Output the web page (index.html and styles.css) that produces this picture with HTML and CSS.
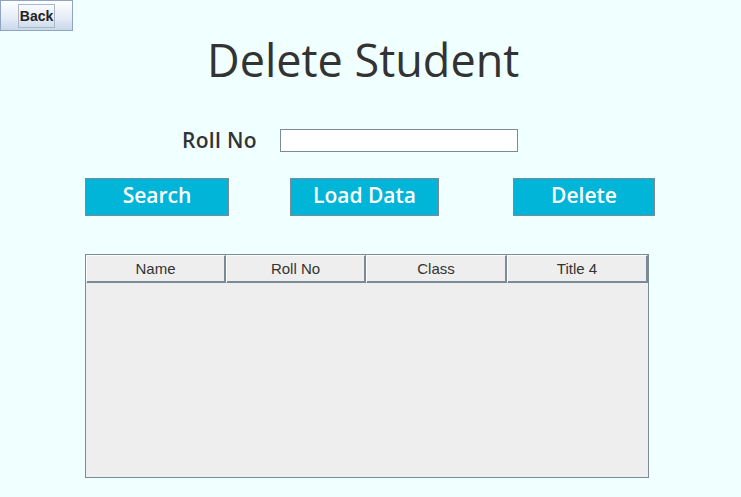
FILE: index.html
```html
<!DOCTYPE html>
<html>
<head>
<meta charset="utf-8">
<link rel="stylesheet" href="styles.css">
</head>
<body>
<button class="back"><span class="back-focus">Back</span></button>
<h1 class="title">Delete Student</h1>
<div class="roll-row">
  <label class="roll-label" for="roll">Roll No</label>
  <input class="roll-input" id="roll" type="text">
</div>
<div class="actions">
  <button class="action search">Search</button>
  <button class="action load">Load Data</button>
  <button class="action delete">Delete</button>
</div>
<div class="table">
  <div class="thead">
    <div class="th">Name</div>
    <div class="th">Roll No</div>
    <div class="th">Class</div>
    <div class="th">Title 4</div>
  </div>
  <div class="tbody"></div>
</div>
</body>
</html>
```
FILE: styles.css
```css
html, body {
  margin: 0;
  padding: 0;
  background: #f0ffff;
  width: 741px;
  height: 497px;
  overflow: hidden;
}
body {
  font-family: "Open Sans", "Noto Sans", sans-serif;
  color: #333;
}
.back {
  display: flex;
  align-items: center;
  justify-content: center;
  width: 73px;
  height: 31px;
  margin: 0;
  padding: 0;
  border: 1px solid #8fa4c0;
  background: linear-gradient(#ffffff, #e4ecf6 60%, #c9d7ea);
  font-family: "Liberation Sans", Arial, sans-serif;
  font-weight: bold;
  font-size: 14px;
  color: #222;
}
.back-focus {
  border: 1px solid #a9b8cc;
  padding: 3px 1px 3px 1px;
  line-height: 16px;
}
.title {
  margin: 0;
  padding-left: 207px;
  font-size: 45px;
  font-weight: normal;
  line-height: 58px;
  height: 58px;
  color: #333;
}
.roll-row {
  display: flex;
  align-items: center;
  margin-top: 39px;
  padding-left: 182px;
  height: 24px;
}
.roll-label {
  width: 98px;
  font-size: 21px;
  font-weight: 600;
  color: #333;
  letter-spacing: 0.3px;
}
.roll-input {
  width: 238px;
  height: 23px;
  box-sizing: border-box;
  border: 1px solid #7a8a99;
  background: #fff;
  margin: 0;
  padding: 0 3px;
}
.actions {
  display: flex;
  margin-top: 26px;
  padding-left: 85px;
  height: 38px;
}
.action {
  height: 38px;
  box-sizing: border-box;
  border: 1px solid #7a8a99;
  background: #00b5d8;
  color: #fff;
  font-family: "Open Sans", "Noto Sans", sans-serif;
  font-size: 21px;
  font-weight: 600;
  padding: 0 0 5px 0;
  margin: 0;
}
.search { width: 144px; }
.load { width: 149px; margin-left: 61px; }
.delete { width: 142px; margin-left: 74px; }
.table {
  margin-top: 38px;
  margin-left: 85px;
  width: 564px;
  height: 224px;
  box-sizing: border-box;
  border: 1px solid #7a8a99;
  background: #eeeeee;
  display: flex;
  flex-direction: column;
}
.thead {
  display: grid;
  grid-template-columns: 140px 140px 141px 141px;
  height: 26px;
  border-bottom: 1px solid #7a8a99;
}
.th {
  box-sizing: border-box;
  border-left: 1px solid #fff;
  border-top: 1px solid #fff;
  border-right: 2px solid #7a8a99;
  border-bottom: 1px solid #7a8a99;
  font-family: "Liberation Sans", Arial, sans-serif;
  font-size: 15px;
  color: #333;
  text-align: center;
  line-height: 26px;
}
.tbody {
  flex: 1;
}
```
